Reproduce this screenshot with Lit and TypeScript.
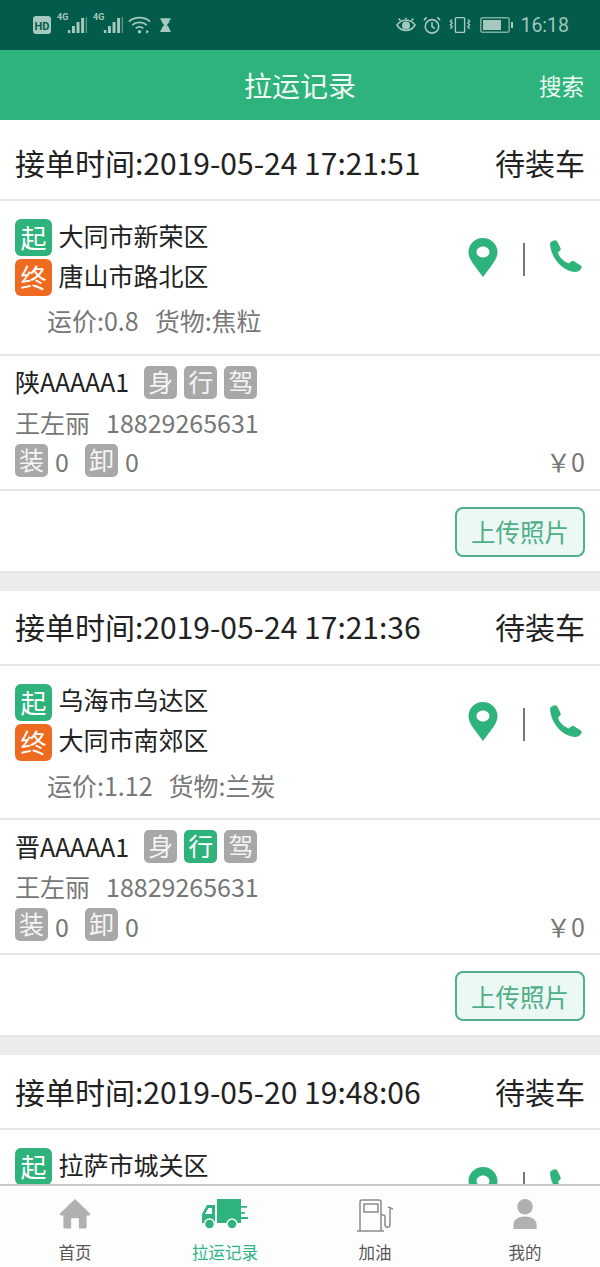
import { LitElement, html, css, svg } from "lit";
import { customElement } from "lit/decorators.js";

interface Order {
  time: string; from: string; to: string; price: string; cargo: string;
  plate: string; greenXing: boolean;
}
const orders: Order[] = [
  { time: "2019-05-24 17:21:51", from: "大同市新荣区", to: "唐山市路北区", price: "0.8", cargo: "焦粒", plate: "陕AAAAA1", greenXing: false },
  { time: "2019-05-24 17:21:36", from: "乌海市乌达区", to: "大同市南郊区", price: "1.12", cargo: "兰炭", plate: "晋AAAAA1", greenXing: true },
  { time: "2019-05-20 19:48:06", from: "拉萨市城关区", to: "", price: "", cargo: "", plate: "", greenXing: false },
];

const bars = svg`<svg class="bars" width="20" height="18" viewBox="0 0 24 18" preserveAspectRatio="none"><path d="M1 14h3v3H1zM6 10h3.500v7H6zM11.500 6H15v11h-3.500zM17 2h3.500v15H17z" fill="#a5c9bf"/><path d="M22.500 1H24v16h-1.500z" fill="#5f9688"/></svg>`;

@customElement("app-root")
export class AppRoot extends LitElement {
  static styles = css`
    :host { display: block; width: 600px; height: 1267px; overflow: hidden; background: #fff;
      font-family: "Noto Sans CJK SC", "Noto Sans", sans-serif; }
    .page { display: flex; flex-direction: column; height: 1267px; }
    .status { height: 50px; flex: none; background: #035b4b; color: #a5c9bf; display: flex; align-items: center;
      justify-content: space-between; padding: 0 31px 0 33px; box-sizing: border-box; }
    .status svg { display: block; }
    .sl, .sr { display: flex; align-items: center; }
    .time { font: 19.5px "Roboto", sans-serif; margin-left: 6px; color: #9fc6bb; }
    .g4 { font: bold 9px "Roboto", sans-serif; color: #a5c9bf; align-self: flex-start; margin: -3px -1px 0 6px; width: 11px; }
    .g4.second { margin-left: 6px; }
    .wifi { margin-left: 5px; }
    .glass { margin-left: 9px; }
    .alarm { margin-left: 7px; }
    .vib { margin-left: 7px; }
    .batt { margin-left: 8px; }
    .bar { height: 70px; flex: none; background: #2db37b; color: #fff; display: grid; grid-template-columns: 1fr auto 1fr; align-items: center; padding: 0 16px; box-sizing: border-box; }
    .bar .title { font-size: 28px; color: #f0faf5; }
    .bar .search { font-size: 22.5px; justify-self: end; color: #eefaf4; }
    .scroll { flex: 1; overflow: hidden; background: #ececec; }
    .card { background: #fff; margin-bottom: 18px; }
    .card:first-child { padding-top: 6px; }
    .row { border-bottom: 2px solid #e6e6e6; box-sizing: border-box; padding: 0 15px 0 15px; }
    .r1 { height: 75px; display: flex; align-items: center; justify-content: space-between; color: #222; font-size: 30px; padding-bottom: 2px; }
    .r2 { height: 154.5px; padding-top: 18px; display: flex; justify-content: space-between; }
    .place { display: flex; align-items: center; gap: 6.5px; height: 37px; margin-bottom: 3px; font-size: 25px; color: #222; }
    .place .nm { margin-bottom: 6px; }
    .tag { width: 37px; height: 37px; border-radius: 6px; color: #fff; font-size: 26px; line-height: 35px; text-align: center; flex: none; }
    .g { background: #2db37b; }
    .o { background: #ee6a1f; }
    .n { background: #a8a8a8; color: #f4f4f4; }
    .tag.s { width: 33px; height: 33px; font-size: 25px; line-height: 31px; border-radius: 5px; }
    .price { color: #777; font-size: 25px; margin: 6px 0 0 32px; line-height: 36px; display: flex; gap: 16px; }
    .acts { display: flex; align-items: center; height: 76px; padding-right: 2px; }
    .sep { width: 2px; height: 33px; background: #777; margin: 5px 24px 0 25px; }
    .r3 { height: 135px; padding-top: 8px; }
    .plate { display: flex; align-items: center; height: 37px; font-size: 25px; color: #222; }
    .plate .pn { margin-bottom: 2px; }
    .plate .tags { display: flex; gap: 7px; margin-left: 15px; }
    .who { color: #777; font-size: 25px; line-height: 36px; margin-top: 3px; display: flex; gap: 16px; }
    .cnt { display: flex; align-items: center; height: 37px; color: #777; font-size: 25px; margin-top: 2px; }
    .cnt .v { margin: 0 16px 0 7px; padding-top: 2px; }
    .cnt .yen { margin-left: auto; padding-top: 2px; }
    .r4 { height: 82px; display: flex; align-items: center; justify-content: flex-end; padding-top: 2px; }
    .btn { width: 130px; height: 50px; border: 2px solid #4fb08a; border-radius: 8px; background: #ecf8f3; color: #4fae88; font-size: 24.5px; display: flex; align-items: center; justify-content: center; box-sizing: border-box; }
    .tabs { height: 83px; flex: none; border-top: 2px solid #c8c8c8; background: #fdfdfd; display: grid; grid-template-columns: repeat(4, 150px); box-sizing: border-box; }
    .tab { display: flex; flex-direction: column; align-items: center; font-size: 16.5px; color: #555; }
    .tab .ic { height: 38px; margin-top: 13px; display: flex; align-items: flex-start; }
    .tab.on { color: #2db58a; }
    .tab .lb { line-height: 20px; margin-top: 5px; }
  `;

  private pin = svg`<svg width="30" height="39" viewBox="0 0 30 39"><path fill-rule="evenodd" fill="#2db37b" d="M15 0C6.700 0 .5 6.300.5 14.200c0 8 8.300 15.700 14.500 24.800C21.200 29.900 29.500 22.200 29.500 14.200 29.500 6.300 23.300 0 15 0Zm0 8.500c3.700 0 6.500 2.500 6.500 5.500s-2.800 5.500-6.500 5.500-6.500-2.500-6.500-5.500 2.800-5.500 6.500-5.500Z"/></svg>`;
  private phone = svg`<svg width="34" height="34" viewBox="0 0 34 34"><path fill="#2db37b" d="M1 4C1 2 3 1 5 .5 7 0 8 1 9 3l2.500 5c.5 1.500 0 2.500-1.500 3.500l-1 1c1 4.500 6 9.500 11 11l1.500-1.500c1-1 2-1.500 3.500-.7l6 3.700c2 1 2 2.500 1 4-1.500 2-3.500 3-6 3C13 31 2 18 1 4Z"/></svg>`;

  private card(o: Order) {
    return html`<section class="card">
      <div class="row r1"><span>接单时间:${o.time}</span><span>待装车</span></div>
      <div class="row r2">
        <div>
          <div class="place"><span class="tag g">起</span><span class="nm">${o.from}</span></div>
          ${o.to ? html`<div class="place"><span class="tag o">终</span><span class="nm">${o.to}</span></div>
          <div class="price"><span>运价:${o.price}</span><span>货物:${o.cargo}</span></div>` : ""}
        </div>
        <div class="acts">${this.pin}<span class="sep"></span>${this.phone}</div>
      </div>
      ${o.plate ? html`<div class="row r3">
        <div class="plate"><span class="pn">${o.plate}</span><span class="tags"><span class="tag s n">身</span><span class="tag s ${o.greenXing ? "g" : "n"}">行</span><span class="tag s n">驾</span></span></div>
        <div class="who"><span>王左丽</span><span>18829265631</span></div>
        <div class="cnt"><span class="tag s n">装</span><span class="v">0</span><span class="tag s n">卸</span><span class="v">0</span><span class="yen">￥0</span></div>
      </div>
      <div class="row r4"><span class="btn">上传照片</span></div>` : ""}
    </section>`;
  }

  render() {
    return html`<div class="page">
      <div class="status">
        <div class="sl">
          <svg width="18" height="18" viewBox="0 0 18 18"><rect width="18" height="18" rx="3" fill="#a5c9bf"/><text x="9" y="13.500" text-anchor="middle" font-family="Roboto" font-weight="700" font-size="11" fill="#035b4b">HD</text></svg>
          <span class="g4">4G</span>${bars}
          <span class="g4 second">4G</span>${bars}
          <svg class="wifi" width="23" height="20" viewBox="0 0 24 20" fill="none" stroke="#a5c9bf" stroke-width="1.800"><path d="M1 6.500C7 1 17 1 23 6.500M4.500 10c4-3.500 11-3.500 15 0M8 13.500c2.500-2 5.500-2 8 0"/><circle cx="12" cy="17" r="1.800" fill="#a5c9bf" stroke="none"/><path d="M19 15l3 2-3 2z" fill="#a5c9bf" stroke="none"/></svg>
          <svg class="glass" width="11" height="14" viewBox="0 0 12 15"><path fill="#a5c9bf" d="M.5 0h11v2h-1c0 3-2 4-3 5.500 1 1.500 3 2.500 3 5.500h1v2H.5v-2h1c0-3 2-4 3-5.500-1-1.500-3-2.500-3-5.500h-1z"/></svg>
        </div>
        <div class="sr">
          <svg width="20" height="17" viewBox="0 0 22 17" fill="none" stroke="#a5c9bf" stroke-width="1.800"><path d="M1 8c5-7 15-7 20 0-5 8-15 8-20 0Z"/><circle cx="11" cy="8.500" r="3.500" fill="#a5c9bf"/><path d="M3 1l2 2M19 1l-2 2M11 0v2"/></svg>
          <svg class="alarm" width="18" height="19" viewBox="0 0 20 20" fill="none" stroke="#a5c9bf" stroke-width="1.800"><circle cx="10" cy="11" r="7.500"/><path d="M10 6.500V11l3 2.500M1 4l3-3M19 4l-3-3"/></svg>
          <svg class="vib" width="24" height="18" viewBox="0 0 26 18" fill="none" stroke="#a5c9bf" stroke-width="1.500"><rect x="8" y="1" width="10" height="16" rx="1"/><path d="M4.500 3l-2 2 2 2-2 2 2 2-2 2M21.500 3l2 2-2 2 2 2-2 2 2 2"/></svg>
          <svg class="batt" width="34" height="16" viewBox="0 0 34 16"><rect x=".8" y=".8" width="28.400" height="14.400" rx="2" fill="none" stroke="#7eaea1" stroke-width="1.500"/><rect x="3" y="3" width="18" height="10" fill="#a5c9bf"/><rect x="31" y="5" width="2" height="6" fill="#a5c9bf"/></svg>
          <span class="time">16:18</span>
        </div>
      </div>
      <div class="bar"><span></span><span class="title">拉运记录</span><span class="search">搜索</span></div>
      <div class="scroll">${orders.map((o) => this.card(o))}</div>
      <nav class="tabs">
        <div class="tab"><div class="ic"><svg width="32" height="30" viewBox="0 0 32 31"><path fill="#b0b0b0" d="M16 0 31.500 15c.6 1-.1 2-1 2H28v12c0 1-.7 1.500-1.500 1.500H20V20h-8v10.500H5.500C4.700 30.500 4 30 4 29V17H1.500c-.9 0-1.600-1-1-2z"/></svg></div><span class="lb">首页</span></div>
        <div class="tab on"><div class="ic"><svg width="46" height="31" viewBox="0 0 46 31"><path fill="#2db37b" d="M15 0h24v7h6v1.800h-6V13h4v1.800h-4V18h7v2h-7v4H15z"/><path fill="#2db37b" fill-rule="evenodd" d="M13 6v18H0v-9l5-9zM3 15h7V9H6.500z"/><circle cx="7.500" cy="25" r="5" fill="#2db37b" stroke="#fdfdfd" stroke-width="1.500"/><circle cx="30" cy="25" r="5" fill="#2db37b" stroke="#fdfdfd" stroke-width="1.500"/></svg></div><span class="lb">拉运记录</span></div>
        <div class="tab"><div class="ic"><svg width="36" height="33" viewBox="0 0 36 33" fill="none" stroke="#8a8a8a" stroke-width="1.500"><path d="M3 32V3c0-1 .7-2 2-2h17c1 0 2 1 2 2v29M0 32h27"/><rect x="7" y="5" width="14" height="8"/><path d="M24 16h3c1 0 1 1 1 2v8c0 3 5 3 5 0V10M31 8l5 2"/></svg></div><span class="lb">加油</span></div>
        <div class="tab"><div class="ic"><svg width="24" height="30" viewBox="0 0 24 31"><circle cx="12" cy="8" r="8" fill="#b0b0b0"/><path fill="#b0b0b0" d="M0 31v-4c0-6 5-9 12-9s12 3 12 9v4z"/></svg></div><span class="lb">我的</span></div>
      </nav>
    </div>`;
  }
}
